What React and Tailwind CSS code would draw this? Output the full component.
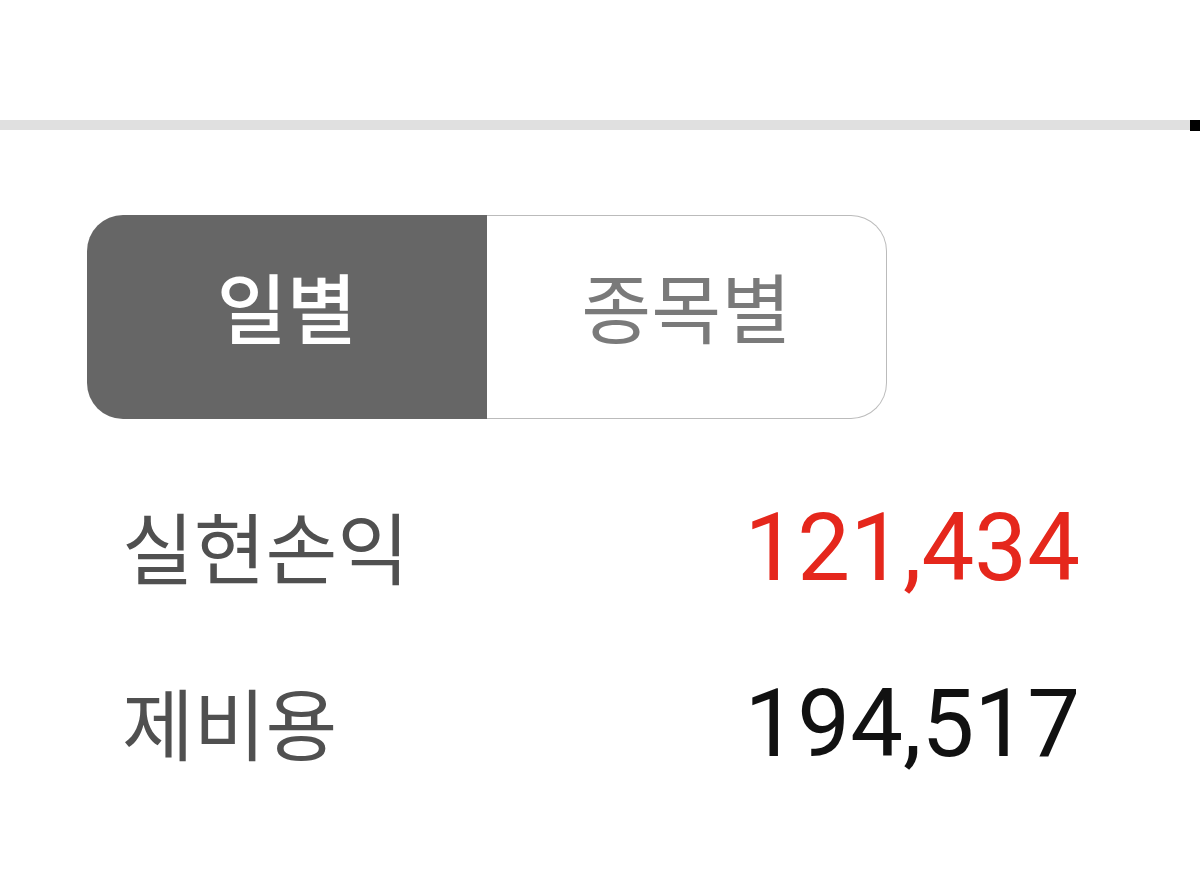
import React from 'react';

const rows = [
  { label: '실현손익', value: '121,434', color: 'text-[#e5271c]' },
  { label: '제비용', value: '194,517', color: 'text-[#111]' },
];

const App = () => {
  const [tab, setTab] = React.useState('daily');

  return (
    <div className="w-[1200px] h-[892px] bg-white overflow-hidden font-['Roboto','Noto_Sans_CJK_KR',sans-serif]">
      {/* Progress track */}
      <div className="pt-[120px] flex items-stretch">
        <div className="flex-1 h-[10px] bg-[#e0e0e0]" />
        <div className="w-[10px] h-[11px] bg-black" />
      </div>

      {/* Segment toggle */}
      <div className="pl-[87px] pt-[84px]">
        <div className="flex w-[800px] h-[204px]">
          <button
            onClick={() => setTab('daily')}
            className={`flex-1 flex items-center justify-center pb-[24px] rounded-l-[36px] text-[76px] font-['Noto_Sans_CJK_KR',sans-serif] ${
              tab === 'daily'
                ? 'bg-[#666666] text-white font-medium'
                : 'bg-white text-[#7a7a7a] border border-r-0 border-[#bbbbbb]'
            }`}
          >
            일별
          </button>
          <button
            onClick={() => setTab('stock')}
            className={`flex-1 flex items-center justify-center pb-[24px] rounded-r-[36px] text-[76px] font-['Noto_Sans_CJK_KR',sans-serif] ${
              tab === 'stock'
                ? 'bg-[#666666] text-white font-medium'
                : 'bg-white text-[#7a7a7a] border border-l-0 border-[#bbbbbb]'
            }`}
          >
            종목별
          </button>
        </div>
      </div>

      {/* Summary rows */}
      <div className="pl-[122px] pr-[120px] pt-[71px] flex flex-col gap-[66px]">
        {rows.map((row) => (
          <div key={row.label} className="flex items-center justify-between h-[110px]">
            <span className="text-[78px] text-[#505050] font-['Noto_Sans_CJK_KR',sans-serif]">
              {row.label}
            </span>
            <span className={`mt-[6px] text-[94px] font-['Roboto',sans-serif] ${row.color}`}>
              {row.value}
            </span>
          </div>
        ))}
      </div>
    </div>
  );
};

export default App;
